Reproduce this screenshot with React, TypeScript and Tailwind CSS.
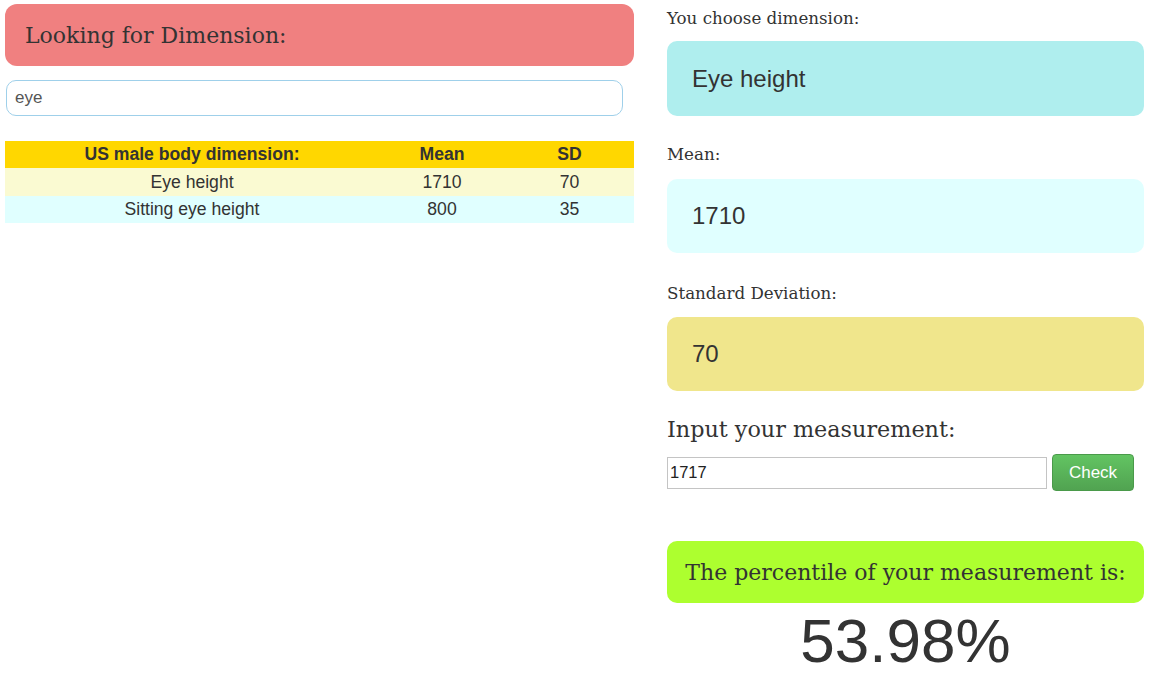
import React from "react";

const serif = { fontFamily: '"DejaVu Serif", Georgia, serif' };

export default function App() {
  return (
    <div className="flex w-[1152px] h-[685px] bg-white text-[#333] pl-[5px]" style={{ fontFamily: '"Liberation Sans", Arial, sans-serif' }}>
      <div className="w-[629px] pt-[4px]">
        <div className="h-[62px] rounded-[12px] bg-[#F08080] flex items-center pl-[20px]">
          <span className="text-[22px] text-[#333]" style={serif}>Looking for Dimension:</span>
        </div>
        <div className="mt-[14px] w-[617px] h-[36px] ml-[1px] rounded-[10px] border border-[#9fd0ea] flex items-center pl-[8px] text-[17px] text-[#555]">
          eye
        </div>
        <table className="mt-[25px] w-[629px] border-collapse text-[17.6px]">
          <thead>
            <tr className="bg-[#FFD700] h-[27px]">
              <th className="w-[374px] font-bold text-center">US male body dimension:</th>
              <th className="w-[126px] font-bold text-center">Mean</th>
              <th className="font-bold text-center">SD</th>
            </tr>
          </thead>
          <tbody>
            <tr className="bg-[#FAFAD2] h-[28px]">
              <td className="text-center">Eye height</td>
              <td className="text-center">1710</td>
              <td className="text-center">70</td>
            </tr>
            <tr className="bg-[#E0FFFF] h-[27px]">
              <td className="text-center">Sitting eye height</td>
              <td className="text-center">800</td>
              <td className="text-center">35</td>
            </tr>
          </tbody>
        </table>
      </div>
      <div className="ml-[33px] w-[477px] flex flex-col">
        <div className="mt-[8px] h-[20px] text-[16.7px] leading-[20px] whitespace-nowrap" style={serif}>You choose dimension:</div>
        <div className="mt-[13px] h-[75px] rounded-[10px] bg-[#AFEEEE] flex items-center pl-[25px] text-[24px]">Eye height</div>
        <div className="mt-[28px] h-[20px] text-[16.7px] leading-[20px]" style={serif}>Mean:</div>
        <div className="mt-[15px] h-[74px] rounded-[10px] bg-[#E0FFFF] flex items-center pl-[25px] text-[24px]">1710</div>
        <div className="mt-[30px] h-[20px] text-[16.7px] leading-[20px]" style={serif}>Standard Deviation:</div>
        <div className="mt-[14px] h-[74px] rounded-[10px] bg-[#F0E68C] flex items-center pl-[25px] text-[24px]">70</div>
        <div className="mt-[23px] h-[30px] text-[22.3px] leading-[30px]" style={serif}>Input your measurement:</div>
        <div className="mt-[10px] flex items-center">
          <div className="w-[380px] h-[32px] border border-[#c4c4c4] flex items-center pl-[2px] text-[16.5px] text-[#222]">1717</div>
          <div className="ml-[5px] w-[82px] h-[37px] rounded-[4px] border border-[#4a9a4a] bg-gradient-to-b from-[#62c462] to-[#51a351] text-white text-[17px] flex items-center justify-center">Check</div>
        </div>
        <div className="mt-[50px] w-[477px] h-[62px] rounded-[10px] bg-[#ADFF2F] flex items-center justify-center text-[22px]" style={serif}>The percentile of your measurement is:</div>
        <div className="mt-[3px] text-center text-[62px] leading-[70px] text-[#333]">53.98%</div>
      </div>
    </div>
  );
}
